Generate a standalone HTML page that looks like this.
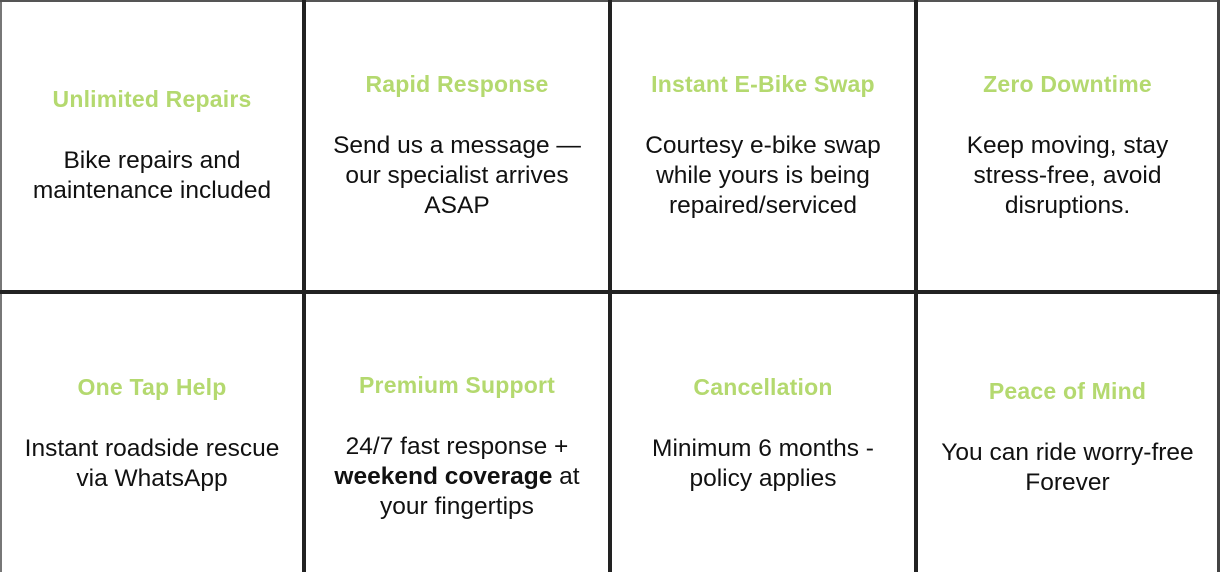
<!DOCTYPE html>
<html><head><meta charset="utf-8"><style>
*{margin:0;padding:0;box-sizing:border-box}
body{width:1220px;height:572px;overflow:hidden;background:#fff;font-family:"Liberation Sans",sans-serif;position:relative}
.c{position:absolute;display:flex;flex-direction:column;justify-content:center;align-items:center;text-align:center;color:#111}
.t{color:#b4d96f;font-weight:bold;font-size:23px;letter-spacing:0.2px;line-height:30px;margin-bottom:32px}
.b{font-size:24.5px;line-height:30px;white-space:nowrap}
.v{position:absolute;top:0;height:572px;width:4px;background:#222}
.h{position:absolute;left:0;width:1220px;height:4px;top:290px;background:#222}
</style></head><body>
<div style="position:absolute;left:0;top:0;width:2px;height:572px;background:#777"></div>
<div style="position:absolute;left:0;top:0;width:1220px;height:2px;background:#555"></div>
<div style="position:absolute;left:1217px;top:0;width:3px;height:572px;background:#444"></div>
<div class="v" style="left:302px"></div>
<div class="v" style="left:608px"></div>
<div class="v" style="left:914px"></div>
<div class="h"></div>

<div class="c" style="left:2px;top:0px;width:300px;height:290px"><div class="t">Unlimited Repairs</div><div class="b">Bike repairs and<br>maintenance included</div></div>
<div class="c" style="left:306px;top:0px;width:302px;height:290px"><div class="t">Rapid Response</div><div class="b">Send us a message —<br>our specialist arrives<br>ASAP</div></div>
<div class="c" style="left:612px;top:0px;width:302px;height:290px"><div class="t">Instant E-Bike Swap</div><div class="b">Courtesy e-bike swap<br>while yours is being<br>repaired/serviced</div></div>
<div class="c" style="left:918px;top:0px;width:299px;height:290px"><div class="t">Zero Downtime</div><div class="b">Keep moving, stay<br>stress-free, avoid<br>disruptions.</div></div>

<div class="c" style="left:2px;top:292px;width:300px;height:282px"><div class="t">One Tap Help</div><div class="b">Instant roadside rescue<br>via WhatsApp</div></div>
<div class="c" style="left:306px;top:305px;width:302px;height:282px"><div class="t">Premium Support</div><div class="b">24/7 fast response +<br><b>weekend coverage</b> at<br>your fingertips</div></div>
<div class="c" style="left:612px;top:292px;width:302px;height:282px"><div class="t">Cancellation</div><div class="b">Minimum 6 months -<br>policy applies</div></div>
<div class="c" style="left:918px;top:292px;width:299px;height:290px"><div class="t">Peace of Mind</div><div class="b">You can ride worry-free<br>Forever</div></div>
</body></html>
